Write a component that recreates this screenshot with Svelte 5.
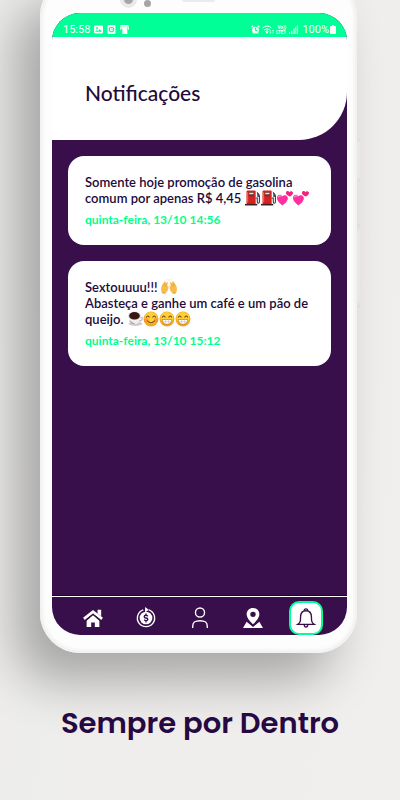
<script lang="ts">
	type Part = string | { emoji: string; label: string };

	interface Notification {
		lines: Part[][];
		date: string;
	}

	const pump = { emoji: 'pump', label: '⛽' };
	const hearts = { emoji: 'hearts', label: '💕' };
	const grin = { emoji: 'grin', label: '😁' };

	const notifications: Notification[] = [
		{
			lines: [['Somente hoje promoção de gasolina comum por apenas R$ 4,45 ', pump, pump, hearts, hearts]],
			date: 'quinta-feira, 13/10 14:56'
		},
		{
			lines: [
				['Sextouuuu!!! ', { emoji: 'hands', label: '🙌' }],
				[
					'Abasteça e ganhe um café e um pão de queijo. ',
					{ emoji: 'coffee', label: '☕' },
					{ emoji: 'smile', label: '😊' },
					grin,
					grin
				]
			],
			date: 'quinta-feira, 13/10 15:12'
		}
	];

	const tabs = [
		{ id: 'home', label: 'Início' },
		{ id: 'cashback', label: 'Cashback' },
		{ id: 'profile', label: 'Perfil' },
		{ id: 'places', label: 'Postos' },
		{ id: 'alerts', label: 'Notificações' }
	];

	let active = $state('alerts');
</script>

{#snippet emoji(name: string, label: string)}
	<svg class="emoji" viewBox="0 0 30 30" role="img" aria-label={label}>
		{#if name === 'pump'}
			<rect x="3" y="1" width="17" height="26" rx="2" fill="#d8211f" />
			<path d="M3 3v22l3-3V5z" fill="#f0605a" />
			<rect x="7" y="4" width="10" height="8" fill="#5d3b3b" />
			<path d="M8 5h8v3H8z" fill="#e9dcd8" />
			<rect x="0" y="26" width="23" height="3" fill="#332226" />
			<path d="M20 15h3v7q0 3 2 3t2-3V11l-4-6" fill="none" stroke="#3d3034" stroke-width="2" />
			<path d="M22 3l5 5v5h-4V9z" fill="#54474a" />
		{:else if name === 'hearts'}
			<path d="M10 29C4 24 0 20 0 15c0-7 8-8 10-3 4-5 12-1 10 6-1 4-5 8-10 11z" fill="#ff2fa0" />
			<path d="M3 14c0-3 3-4 5-2" fill="none" stroke="#ff9bd0" stroke-width="2" />
			<path d="M24 12c-6-2-8-5-7-8 1-3 5-3 6 0 2-3 6-2 7 1 0 3-3 6-6 7z" fill="#f5207f" />
		{:else if name === 'hands'}
			<path d="M2 27C-1 21 0 14 3 10l4-6 2 1-1 5 4-5 1 2-2 7 2-2 1 2c0 6-2 10-6 13z" fill="#f6bd4c" />
			<path d="M28 27c3-6 2-13-1-17l-4-6-2 1 1 5-4-5-1 2 2 7-2-2-1 2c0 6 2 10 6 13z" fill="#f6bd4c" />
			<path d="M5 12l3-5M8 14l3-5M25 12l-3-5M22 14l-3-5M3 26l5 1M27 26l-5 1" stroke="#d58b27" stroke-width="1" />
			<path d="M10 3l1-3M20 3l-1-3M15 4V0" stroke="#f2cf83" stroke-width="1" />
		{:else if name === 'coffee'}
			<ellipse cx="16" cy="24" rx="13" ry="4" fill="#cfcccb" />
			<path d="M3 8c0 10 4 16 12 16 7 0 11-6 11-16z" fill="#f1efee" />
			<path d="M25 12c5-2 6 5-2 7" fill="none" stroke="#b9b5b4" stroke-width="2" />
			<ellipse cx="14" cy="9" rx="12" ry="8" fill="#ddd" />
			<ellipse cx="14" cy="9" rx="10" ry="7" fill="#371711" />
			<path d="M5 18c2 4 5 6 9 6" fill="none" stroke="#aaa5a5" stroke-width="2" />
		{:else}
			<circle cx="15" cy="15" r="14" fill="#f3a91f" />
			<ellipse cx="15" cy="13" rx="12" ry="11" fill="#ffcf36" />
			<path d="M6 12q3-5 6 0M18 12q3-5 6 0" fill="none" stroke="#6b3d12" stroke-width="2" />
			{#if name === 'smile'}
				<circle cx="6" cy="17" r="4" fill="#f8823a" opacity="0.7" />
				<circle cx="24" cy="17" r="4" fill="#f8823a" opacity="0.7" />
				<path d="M8 18q7 8 14 0" fill="none" stroke="#7c4615" stroke-width="2" />
			{:else}
				<path d="M6 16h18q-1 9-9 9t-9-9z" fill="#fff" stroke="#9a5d18" stroke-width="1" />
				<path d="M8 20h14M12 17v7M18 17v7" stroke="#c5b79d" stroke-width="1" />
			{/if}
		{/if}
	</svg>
{/snippet}

<div class="page">
	<div class="phone">
		<div class="bezel">
			<span class="camera"></span>
			<span class="sensor"></span>
			<span class="speaker"></span>
		</div>
		<span class="side power"></span>
		<span class="side volume"></span>

		<div class="screen">
			<div class="status">
				<span class="clock">15:58</span>
				<div class="icons left">
					<svg class="status-icon" viewBox="0 0 16 16">
						<path fill="#fff" fill-rule="evenodd" d="M2 1h12q2 0 2 2v10q0 2-2 2H2q-2 0-2-2V3q0-2 2-2zM2 12h12l-4-5-3 4-2-2zM4 4v3h3V4z" />
					</svg>
					<svg class="status-icon" viewBox="0 0 16 16">
						<rect x="1" y="0" width="14" height="16" rx="2" fill="#fff" />
						<circle cx="8" cy="8" r="4" fill="none" stroke="#00ff97" stroke-width="2" />
						<path d="M8 6v2h3" fill="none" stroke="#00ff97" />
					</svg>
					<svg class="status-icon" viewBox="0 0 16 16">
						<path fill="#fff" d="M1 0h14l1 8h-3v8H4V8H0z" />
						<path d="M3 2v7M6 2v2M9 2v2M13 2v7" stroke="#00ff97" />
					</svg>
				</div>
				<div class="icons right">
					<svg class="status-icon" viewBox="0 0 16 16">
						<circle cx="8" cy="9" r="6" fill="#fff" />
						<path d="M1 4l3-3M15 4l-3-3M3 15l2-2M13 15l-2-2" stroke="#fff" stroke-width="2" />
						<path d="M8 5v4l3 1" fill="none" stroke="#00ff97" stroke-width="2" />
					</svg>
					<svg class="wifi" viewBox="0 0 24 18">
						<path d="M1 6q9-8 18 0M4 10q6-5 12 0M7 13q3-3 6 0" fill="none" stroke="#fff" stroke-width="2" />
						<circle cx="10" cy="15" r="2" fill="#fff" />
						<path d="M17 10v7m-2-2l2 2 2-2M22 17v-7m-2 2l2-2 2 2" fill="none" stroke="#fff" />
					</svg>
					<svg class="volte" viewBox="0 0 22 18">
						<text x="3" y="8">Vo))</text>
						<text x="0" y="17">LTE1</text>
					</svg>
					<svg class="status-icon" viewBox="0 0 16 16">
						<path d="M1 16v-3M5 16v-6M9 16V6" stroke="#fff" stroke-width="2" />
						<path d="M12 16V3M15 16V0" stroke="#fff" stroke-width="2" opacity="0.6" />
					</svg>
				</div>
				<span>100%</span>
				<svg class="battery" viewBox="0 0 12 18">
					<path d="M4 0h4v2h2q2 0 2 2v12q0 2-2 2H2q-2 0-2-2V4q0-2 2-2h2z" fill="#fff" />
				</svg>
			</div>

			<header>
				<h1>Notificações</h1>
			</header>

			<main>
				{#each notifications as item}
					<article class="card">
						{#each item.lines as line}
							<p>
								{#each line as part}{#if typeof part === 'string'}{part}{:else}{@render emoji(part.emoji, part.label)}{/if}{/each}
							</p>
						{/each}
						<time>{item.date}</time>
					</article>
				{/each}
			</main>

			<nav>
				{#each tabs as tab}
					<button
						class:active={active === tab.id}
						aria-label={tab.label}
						onclick={() => (active = tab.id)}
					>
						<svg viewBox="0 0 22 22" fill="none" stroke="currentColor" stroke-width="1.5">
							{#if tab.id === 'home'}
								<path d="M1 12L11 4l10 8" stroke-width="3" />
								<path d="M16 2h4v7l-4-3z" fill="currentColor" stroke="none" />
								<path d="M4 14l7-6 7 6v7h-5v-5H9v5H4z" fill="currentColor" stroke="none" />
								<path class="cut" d="M3 13l8-6 8 6" stroke-width="1" />
							{:else if tab.id === 'cashback'}
								<path d="M8 2a9.500 9.500 0 1 0 6 0" />
								<path d="M10 -1l4 3-4 3z" fill="currentColor" stroke="none" />
								<circle cx="11" cy="11" r="7" fill="currentColor" stroke="none" />
								<path class="cut" d="M13 9q-1-1-2-1-2 0-2 1.500t2 1.500 2 1.500-2 1.500q-1 0-2-1M11 6v2M11 14v2" />
							{:else if tab.id === 'profile'}
								<circle cx="11" cy="5" r="5" />
								<path d="M3 22v-2c0-5 3-6 8-6s8 1 8 6v2" />
							{:else if tab.id === 'places'}
								<path
									d="M11 0c-4 0-7 3-7 7 0 5 7 11 7 11s7-6 7-11c0-4-3-7-7-7zm0 4a3 3 0 1 1 0 6 3 3 0 0 1 0-6z"
									fill="currentColor"
									fill-rule="evenodd"
									stroke="none"
								/>
								<path d="M4 15L0 22h22l-4-7-7 6z" fill="currentColor" stroke="none" />
							{:else}
								<path d="M2 18h18c-3-2-3-4-3-8 0-5-2-7-6-7s-6 2-6 7c0 4 0 6-3 8z" />
								<path d="M9 3q0-2 2-2t2 2M9 18q0 3 2 3t2-3" />
							{/if}
						</svg>
					</button>
				{/each}
			</nav>
		</div>
	</div>

	<h2>Sempre por Dentro</h2>
</div>

<style>
	:global(body) {
		margin: 0;
	}

	.page {
		display: flex;
		flex-direction: column;
		min-height: 100vh;
		overflow: hidden;
		background: linear-gradient(100deg, #ececeb, #efeeec 60%, #f0efee);
		font-family: Lato, 'Liberation Sans', sans-serif;
		color: #230a3a;
	}

	.phone {
		position: relative;
		flex: 1;
		display: flex;
		flex-direction: column;
		box-sizing: border-box;
		margin: -24px 43px 0 40px;
		padding: 0 10px 18px 12px;
		border-radius: 40px;
		background: #fdfdfd;
		box-shadow:
			inset 0 0 0 2px #f2f2f2,
			inset 0 0 4px 2px #ececec,
			-24px 28px 50px rgba(0, 0, 0, 0.3);
	}

	.bezel {
		display: flex;
		align-items: center;
		gap: 7px;
		height: 37px;
		padding: 10px 0 0 68px;
		box-sizing: border-box;
	}

	.camera {
		box-sizing: border-box;
		width: 17px;
		height: 17px;
		border: 4px solid #e9e9e9;
		border-radius: 50%;
		background: #a5a5a5;
	}

	.sensor {
		width: 7px;
		height: 7px;
		margin-top: 8px;
		border-radius: 50%;
		background: #a5a5a5;
	}

	.speaker {
		width: 33px;
		height: 4px;
		margin-left: 24px;
		border-radius: 2px;
		background: #ebebeb;
	}

	.side {
		position: absolute;
		left: 100%;
		width: 3px;
		background: linear-gradient(#dcdcdb, #e8e8e7 10%, #e8e8e7 90%, #dcdcdb);
	}

	.power {
		top: 163px;
		height: 42px;
	}

	.volume {
		top: 248px;
		height: 84px;
	}

	.screen {
		flex: 1;
		display: flex;
		flex-direction: column;
		overflow: hidden;
		border-radius: 28px;
		background: #380f4b;
	}

	.status {
		display: flex;
		align-items: center;
		gap: 4px;
		height: 24px;
		padding: 9px 11px 0;
		box-sizing: border-box;
		background: #00ff97;
		color: #fff;
		font: 11px/16px Roboto, sans-serif;
	}

	.icons {
		display: flex;
		align-items: center;
	}

	.left {
		gap: 4px;
	}

	.right {
		gap: 2px;
		margin-left: auto;
	}

	.status-icon {
		width: 9px;
		height: 9px;
	}

	.wifi {
		width: 12px;
		height: 9px;
	}

	.volte {
		width: 11px;
		height: 9px;
		fill: #fff;
		font: 700 9px Roboto, sans-serif;
	}

	.battery {
		width: 6px;
		height: 9px;
		margin-left: -3px;
	}

	header {
		padding: 42px 33px 33px;
		border-bottom-right-radius: 48px;
		background: #fff;
	}

	h1 {
		margin: 0;
		font-size: 21px;
		font-weight: 500;
		line-height: 28px;
	}

	/* the header's cut corner shows the screen colour behind it */
	main {
		flex: 1;
		display: flex;
		flex-direction: column;
		gap: 16px;
		padding: 16px;
	}

	.card {
		padding: 18px 16px 17px 17px;
		border-radius: 16px;
		background: #fff;
		font-size: 13px;
		font-weight: 600;
		line-height: 16px;
	}

	.card p {
		margin: 0;
	}

	.card time {
		display: block;
		margin-top: 6px;
		color: #00ff8c;
		font-size: 12px;
		font-weight: 700;
	}

	.emoji {
		width: 16px;
		height: 16px;
		vertical-align: -3px;
	}

	.card p {
		min-height: 16px;
	}

	nav {
		display: flex;
		padding: 4px 14px 0;
		border-top: 1px solid #fff;
		box-shadow: 0 -1px #17041f;
	}

	nav button {
		flex: 1;
		display: flex;
		justify-content: center;
		padding: 0;
		border: 0;
		background: none;
		color: #fff;
		cursor: pointer;
	}

	nav svg {
		box-sizing: border-box;
		width: 34px;
		height: 34px;
		padding: 7px;
		overflow: visible;
	}

	nav .active svg {
		padding: 5px;
		border: 2px solid #00ff97;
		border-radius: 10px;
		background: #fff;
		color: #380f4b;
	}

	.cut {
		stroke: #380f4b;
	}

	h2 {
		margin: 0;
		padding: 49px 0 56px;
		font-family: Poppins, Inter, sans-serif;
		font-size: 29px;
		font-weight: 600;
		line-height: 42px;
		text-align: center;
		color: #270a44;
	}
</style>
